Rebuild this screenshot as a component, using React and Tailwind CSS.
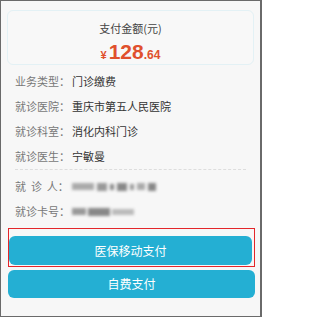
import React from "react";

const cjk = { fontFamily: '"Microsoft YaHei", "Noto Sans CJK SC", "Noto Sans", sans-serif' };

function Row({ label, children }) {
  return (
    <div className="flex h-[25px] items-center pl-[8px] text-[11px] whitespace-nowrap">
      <span className="w-[57px] text-[#777]">{label}</span>
      <span className="text-[#333]">{children}</span>
    </div>
  );
}

export default function App() {
  return (
    <div
      className="w-[262px] h-[317px] bg-[#f7f7f7] border border-r-2 border-[#6a6a6a] overflow-hidden"
      style={cjk}
    >
      <div className="px-[6px] pt-[9px]">
        <div className="h-[55px] rounded-md border border-[#e3f1f5] bg-[#f8f8f8] flex flex-col items-center pt-[10px]">
          <div className="text-[11px] leading-[15px] text-[#444]">支付金额(元)</div>
          <div
            className="mt-[5px] flex items-baseline text-[#e0502d] font-bold leading-none"
            style={{ fontFamily: '"Liberation Sans", Arial, sans-serif' }}
          >
            <span className="text-[11px] mr-[2px]">¥</span>
            <span className="text-[21px]">128</span>
            <span className="text-[12px]">.64</span>
          </div>
        </div>

        <div className="mt-[4px]">
          <Row label="业务类型：">门诊缴费</Row>
          <Row label="就诊医院：">重庆市第五人民医院</Row>
          <Row label="就诊科室：">消化内科门诊</Row>
          <Row label="就诊医生：">宁敏曼</Row>
        </div>
        <div className="mx-[8px] border-t border-dashed border-[#ddd]" />
        <div className="mt-[4px]">
          <div className="flex h-[25px] items-center pl-[8px] text-[11px] whitespace-nowrap">
            <span className="w-[57px] text-[#777] whitespace-pre">{"就  诊  人："}</span>
            <span className="flex items-center gap-[3px] blur-[1.5px]">
              <span className="w-[22px] h-[7px] bg-[#aaa]" />
              <span className="w-[10px] h-[8px] bg-[#999]" />
              <span className="w-[4px] h-[6px] bg-[#888]" />
              <span className="w-[10px] h-[8px] bg-[#888]" />
              <span className="w-[4px] h-[6px] bg-[#999]" />
              <span className="w-[8px] h-[7px] bg-[#aaa]" />
              <span className="w-[8px] h-[8px] bg-[#888]" />
            </span>
          </div>
          <div className="flex h-[25px] items-center pl-[8px] text-[11px] whitespace-nowrap">
            <span className="w-[57px] text-[#777]">就诊卡号：</span>
            <span className="flex items-center gap-[2px] blur-[1.5px]">
              <span className="w-[14px] h-[7px] bg-[#999]" />
              <span className="w-[22px] h-[8px] bg-[#888]" />
              <span className="w-[22px] h-[6px] bg-[#bbb]" />
            </span>
          </div>
        </div>

        <div className="mt-[4px] ml-[1px] w-[247px] border border-[#e3262a] pt-[7px] pb-[1px]">
          <button className="w-[243px] h-[29px] rounded-[6px] bg-[#24afd3] text-white text-[12px]">
            医保移动支付
          </button>
        </div>
        <button className="mt-[3px] ml-[1px] w-[247px] h-[28px] rounded-[6px] bg-[#24afd3] text-white text-[12px]">
          自费支付
        </button>
      </div>
    </div>
  );
}
